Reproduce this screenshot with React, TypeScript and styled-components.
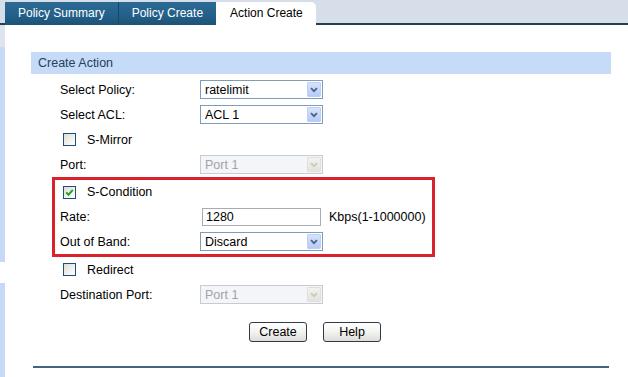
import React from "react";
import styled, { createGlobalStyle } from "styled-components";

const GlobalStyle = createGlobalStyle`
  html, body {
    margin: 0;
    padding: 0;
    background: #ffffff;
  }
  body {
    font-family: "Liberation Sans", Arial, sans-serif;
    font-size: 12.5px;
    color: #000;
  }
`;

const Page = styled.div`
  width: 628px;
  height: 377px;
  overflow: hidden;
  display: flex;
  flex-direction: column;
`;

const TabBar = styled.div`
  display: flex;
  align-items: flex-end;
  height: 23px;
  padding-left: 5px;
  background: #d6dfe9;
  border-bottom: 2px solid #22404f;
`;

const Tab = styled.div<{ $active?: boolean }>`
  height: 21px;
  margin-bottom: -2px;
  padding: 0 13px 2px;
  display: flex;
  align-items: center;
  box-sizing: content-box;
  white-space: nowrap;
  font-size: 12px;
  color: ${(p) => (p.$active ? "#000" : "#fff")};
  background: ${(p) =>
    p.$active ? "#ffffff" : "linear-gradient(to bottom, #2c6a93 0%, #23608a 60%, #1c5276 100%)"};
  border-left: 1px solid ${(p) => (p.$active ? "#ffffff" : "#184562")};
  border-radius: ${(p) => (p.$active ? "0 5px 0 0" : "0")};

  &:first-child {
    border-left: none;
  }
`;

const Body = styled.div`
  flex: 1;
  display: flex;
`;

const Rail = styled.div`
  width: 5px;
  display: flex;
  flex-direction: column;
`;

const RailPiece = styled.div<{ $tone: "gray" | "blue" | "white"; $h?: number }>`
  height: ${(p) => (p.$h ? `${p.$h}px` : "auto")};
  flex: ${(p) => (p.$h ? "none" : "1")};
  background: ${(p) =>
    p.$tone === "gray" ? "#dde4ec" : p.$tone === "blue" ? "#c6d9f6" : "#ffffff"};
`;

const Main = styled.div`
  flex: 1;
  padding: 27px 0 0 26px;
`;

const SectionHeader = styled.div`
  width: 573px;
  height: 22px;
  padding-left: 7px;
  display: flex;
  align-items: center;
  background: #c6dbf7;
  color: #24425e;
  font-size: 12.5px;
`;

const Form = styled.div`
  margin-top: 3px;
  width: 580px;
`;

const Row = styled.div<{ $h?: number }>`
  display: grid;
  grid-template-columns: 140px auto 1fr;
  align-items: center;
  height: ${(p) => p.$h ?? 25}px;
  padding-left: 29px;
`;

const Highlight = styled.div`
  margin-left: 21px;
  width: 377px;
  border: 3px solid #d9222b;

  ${Row} {
    padding-left: 5px;
  }
`;

const Label = styled.span`
  white-space: nowrap;
`;

const CheckLine = styled.label`
  display: flex;
  align-items: center;
  gap: 11px;
  padding-left: 3px;
  white-space: nowrap;
  grid-column: 1 / span 3;
`;

const CheckBox = styled.span`
  width: 11px;
  height: 11px;
  border: 1px solid #1f4f78;
  background: linear-gradient(135deg, #dcdcd6 0%, #f6f6f4 70%, #ffffff 100%);
  display: flex;
  align-items: center;
  justify-content: center;
`;

const SelectBox = styled.div<{ $disabled?: boolean }>`
  width: 116px;
  height: 17px;
  border: 1px solid ${(p) => (p.$disabled ? "#c3ccd7" : "#7f9db9")};
  background: ${(p) => (p.$disabled ? "#f3f5f9" : "#ffffff")};
  color: ${(p) => (p.$disabled ? "#a3a3a3" : "#000")};
  display: flex;
  align-items: center;
  justify-content: space-between;
  padding: 0 1px 0 4px;
  box-sizing: content-box;
`;

const ArrowButton = styled.span<{ $disabled?: boolean }>`
  width: 14px;
  height: 15px;
  display: flex;
  align-items: center;
  justify-content: center;
  border-radius: 1px;
  background: ${(p) =>
    p.$disabled
      ? "linear-gradient(to bottom, #f2f2ee, #e4e4de)"
      : "linear-gradient(to bottom, #d6e3fb, #b6cbf5)"};
  border: 1px solid ${(p) => (p.$disabled ? "#e0e0da" : "#bcd0f5")};
  box-sizing: border-box;
`;

const TextInput = styled.div`
  margin-left: 2px;
  width: 114px;
  height: 16px;
  border: 1px solid #a5acb5;
  padding-left: 3px;
  display: flex;
  align-items: center;
  box-sizing: content-box;
`;

const Hint = styled.span`
  padding-left: 8px;
  white-space: nowrap;
`;

const ButtonRow = styled.div`
  display: flex;
  gap: 16px;
  margin-top: 15px;
  padding-left: 218px;
`;

const Button = styled.button`
  width: 58px;
  height: 20px;
  padding: 0;
  border: 1px solid #2f3c48;
  border-radius: 3px;
  background: linear-gradient(to bottom, #ffffff 0%, #f3f3f1 50%, #dedcd6 100%);
  font-family: "Liberation Sans", Arial, sans-serif;
  font-size: 12.5px;
  color: #000;
`;

const BottomRule = styled.div`
  margin: 24px 0 0 2px;
  width: 576px;
  height: 2px;
  background: #3f6585;
`;

const Chevron = ({ disabled }: { disabled?: boolean }) => (
  <svg width="8" height="6" viewBox="0 0 8 6">
    <path
      d="M1 1.2 L4 4.2 L7 1.2"
      fill="none"
      stroke={disabled ? "#c9c9c4" : "#4d6185"}
      strokeWidth="1.8"
    />
  </svg>
);

const Tick = () => (
  <svg width="9" height="9" viewBox="0 0 9 9">
    <path d="M1.2 4.4 L3.5 6.8 L7.8 1.8" fill="none" stroke="#22a322" strokeWidth="2" />
  </svg>
);

const Select = ({ value, disabled }: { value: string; disabled?: boolean }) => (
  <SelectBox $disabled={disabled}>
    <span>{value}</span>
    <ArrowButton $disabled={disabled}>
      <Chevron disabled={disabled} />
    </ArrowButton>
  </SelectBox>
);

const Check = ({ label, checked }: { label: string; checked?: boolean }) => (
  <CheckLine>
    <CheckBox>{checked && <Tick />}</CheckBox>
    {label}
  </CheckLine>
);

const App = () => {
  return (
    <>
      <GlobalStyle />
      <Page>
        <TabBar>
          <Tab>Policy Summary</Tab>
          <Tab>Policy Create</Tab>
          <Tab $active>Action Create</Tab>
        </TabBar>
        <Body>
          <Rail>
            <RailPiece $tone="gray" $h={22} />
            <RailPiece $tone="blue" $h={215} />
            <RailPiece $tone="white" $h={21} />
            <RailPiece $tone="blue" />
          </Rail>
          <Main>
            <SectionHeader>Create Action</SectionHeader>
            <Form>
              <Row>
                <Label>Select Policy:</Label>
                <Select value="ratelimit" />
              </Row>
              <Row>
                <Label>Select ACL:</Label>
                <Select value="ACL 1" />
              </Row>
              <Row>
                <Check label="S-Mirror" />
              </Row>
              <Row>
                <Label>Port:</Label>
                <Select value="Port 1" disabled />
              </Row>
              <Highlight>
                <Row $h={24}>
                  <Check label="S-Condition" checked />
                </Row>
                <Row>
                  <Label>Rate:</Label>
                  <TextInput>1280</TextInput>
                  <Hint>Kbps(1-1000000)</Hint>
                </Row>
                <Row>
                  <Label>Out of Band:</Label>
                  <Select value="Discard" />
                </Row>
              </Highlight>
              <Row>
                <Check label="Redirect" />
              </Row>
              <Row>
                <Label>Destination Port:</Label>
                <Select value="Port 1" disabled />
              </Row>
              <ButtonRow>
                <Button>Create</Button>
                <Button>Help</Button>
              </ButtonRow>
              <BottomRule />
            </Form>
          </Main>
        </Body>
      </Page>
    </>
  );
};

export default App;
